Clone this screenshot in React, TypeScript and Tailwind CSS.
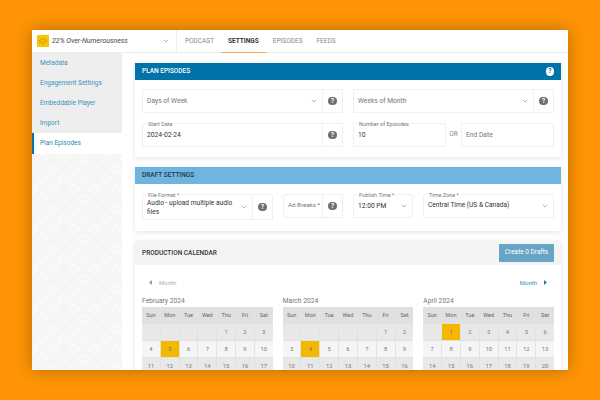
import { ChevronDown } from "lucide-react";

const tabs = ["PODCAST", "SETTINGS", "EPISODES", "FEEDS"];
const sideItems = ["Metadata", "Engagement Settings", "Embeddable Player", "Import"];
const dayNames = ["Sun", "Mon", "Tue", "Wed", "Thu", "Fri", "Sat"];

const months = [
  { title: "February 2024", blanks: 4, days: 17, hot: 5 },
  { title: "March 2024", blanks: 5, days: 16, hot: 4 },
  { title: "April 2024", blanks: 1, days: 20, hot: 1 },
];

function Help({ dark = true }: { dark?: boolean }) {
  return (
    <span
      className={`flex h-[8.5px] w-[8.5px] shrink-0 items-center justify-center rounded-full text-[6.5px] font-bold leading-none ${
        dark ? "bg-[#6f6f6f] text-white" : "bg-white text-[#0073a8]"
      }`}
    >
      ?
    </span>
  );
}

function Chevron() {
  return <ChevronDown className="h-[8px] w-[8px] shrink-0 text-[#666]" strokeWidth={1.5} />;
}

function Label({ text, required }: { text: string; required?: boolean }) {
  return (
    <span className="absolute -top-[3px] left-[4px] bg-white px-[1px] text-[5.5px] leading-[6px] text-[#777]">
      {text}
      {required && <span className="text-[#e0304a]"> *</span>}
    </span>
  );
}

function HelpCell() {
  return (
    <div className="flex w-[20px] shrink-0 items-center justify-center self-stretch border-l border-[#f0f0f0]">
      <Help />
    </div>
  );
}

function Month({ title, blanks, days, hot }: (typeof months)[number]) {
  const cells = [...Array(blanks).fill(0), ...Array.from({ length: days }, (_, i) => i + 1)];
  return (
    <div className="min-w-0">
      <div className="h-[14px] pt-[1px] text-[6.7px] leading-[14px] text-[#777]">{title}</div>
      <div className="grid grid-cols-7 gap-[1px] bg-[#e2e2e2]">
        {dayNames.map((d) => (
          <div key={d} className="flex h-[16px] items-center justify-center bg-[#e0e0e0] text-[5.5px] text-[#666]">
            {d}
          </div>
        ))}
        {cells.map((d, i) => {
          const lightRow = i >= 7 && i < 14;
          return (
            <div
              key={i}
              className={`flex h-[16px] items-center justify-center text-[5.8px] text-[#777] ${
                d === hot ? "bg-[#f5b800]" : lightRow ? "bg-[#f5f5f5]" : "bg-[#e8e8e8]"
              }`}
            >
              {d || ""}
            </div>
          );
        })}
      </div>
    </div>
  );
}

export default function App() {
  return (
    <div className="h-[400px] w-[600px] overflow-hidden bg-[#ff9505] pl-[32px] pt-[30px] font-['Roboto',sans-serif]">
      <div className="flex h-[340px] w-[536px] flex-col overflow-hidden bg-white shadow-[0_0_16px_rgba(80,40,0,0.4)]">
        {/* top bar */}
        <div className="flex h-[23px] shrink-0 border-b border-[#eee]">
          <div className="flex w-[145px] items-center border-r border-[#eee] pl-[5px] pr-[6px]">
            <svg viewBox="0 0 12 12" className="h-[12px] w-[12px] shrink-0">
              <rect width="12" height="12" fill="#f9c400" />
              <path d="M1.5 6 6 3l4.5 3L6 9z" fill="none" stroke="#c99a00" strokeWidth="0.7" />
              <path d="M3.5 6 6 4.4 8.500 6 6 7.600z" fill="none" stroke="#c99a00" strokeWidth="0.5" />
            </svg>
            <span className="ml-[3px] flex-1 truncate pt-[1px] text-[7px] italic text-[#444]">22% Over-Numerousness</span>
            <Chevron />
          </div>
          <div className="flex pl-[1px]">
            {tabs.map((t) => (
              <div
                key={t}
                className={`flex h-[23px] items-center px-[7px] pt-[1px] text-[6.5px] ${
                  t === "SETTINGS"
                    ? "border-b-[1.5px] border-[#f5a94a] font-bold text-[#333]"
                    : "text-[#888]"
                }`}
              >
                {t}
              </div>
            ))}
          </div>
        </div>

        <div className="flex min-h-0 flex-1">
          {/* sidebar */}
          <div className="flex w-[90px] shrink-0 flex-col">
            <div className="bg-[#eeeeee]">
              {sideItems.map((s) => (
                <div key={s} className="flex h-[20px] items-center pl-[8px] pt-[1px] text-[6.5px] text-[#3a93b8]">
                  {s}
                </div>
              ))}
            </div>
            <div className="flex h-[21px] items-center border-l-2 border-[#0073a8] pl-[6px] text-[6.5px] text-[#2a8bb2]">
              Plan Episodes
            </div>
            <svg className="w-full flex-1 bg-[#f6f6f6]">
              <defs>
                <pattern id="lattice" width="21" height="20" patternUnits="userSpaceOnUse">
                  <path d="M5 5 10.500 0 16 5 10.500 10z" fill="none" stroke="#ffffff" strokeWidth="0.9" />
                  <path d="M-5.500 15 0 10 5.500 15 0 20z" fill="none" stroke="#ffffff" strokeWidth="0.9" />
                  <path d="M15.500 15 21 10 26.500 15 21 20z" fill="none" stroke="#ffffff" strokeWidth="0.9" />
                </pattern>
              </defs>
              <rect width="100%" height="100%" fill="url(#lattice)" />
            </svg>
          </div>

          {/* content */}
          <div className="flex min-w-0 flex-1 flex-col gap-[10px] pl-[13px] pr-[7px] pt-[10px]">
            <section className="shrink-0 bg-white shadow-[0_1px_5px_rgba(0,0,0,0.12)]">
              <div className="flex h-[17px] items-center justify-between bg-[#0073a8] pl-[7px] pr-[7px] text-[6.5px] font-medium text-white">
                PLAN EPISODES
                <Help dark={false} />
              </div>
              <div className="flex flex-col gap-[10px] p-[7px] pb-[10px] pt-[9px]">
                <div className="grid grid-cols-2 gap-[10px]">
                  <div className="flex h-[24px] items-center rounded-[1px] border border-[#f0f0f0]">
                    <span className="flex-1 pl-[4px] text-[6.7px] text-[#777]">Days of Week</span>
                    <span className="pr-[4px]"><Chevron /></span>
                    <HelpCell />
                  </div>
                  <div className="flex h-[24px] items-center rounded-[1px] border border-[#f0f0f0]">
                    <span className="flex-1 pl-[4px] text-[6.7px] text-[#777]">Weeks of Month</span>
                    <span className="pr-[4px]"><Chevron /></span>
                    <HelpCell />
                  </div>
                </div>
                <div className="grid grid-cols-2 gap-[10px]">
                  <div className="relative flex h-[24px] items-center rounded-[1px] border border-[#f0f0f0]">
                    <Label text="Start Date" />
                    <span className="flex-1 pl-[4px] text-[6.7px] text-[#333]">2024-02-24</span>
                    <HelpCell />
                  </div>
                  <div className="flex items-center">
                    <div className="relative flex h-[24px] w-[93px] items-center rounded-[1px] border border-[#f0f0f0] pl-[4px] text-[6.7px] text-[#333]">
                      <Label text="Number of Episodes" />
                      10
                    </div>
                    <span className="w-[15px] text-center text-[6.5px] text-[#888]">OR</span>
                    <div className="flex h-[24px] flex-1 items-center rounded-[1px] border border-[#f0f0f0] pl-[4px] text-[6.7px] text-[#777]">
                      End Date
                    </div>
                  </div>
                </div>
              </div>
            </section>

            <section className="shrink-0 bg-white shadow-[0_1px_5px_rgba(0,0,0,0.12)]">
              <div className="flex h-[17px] items-center bg-[#70b5df] pl-[7px] text-[6.5px] font-medium text-[#1c3a4a]">
                DRAFT SETTINGS
              </div>
              <div className="flex items-start gap-[10px] p-[7px] pb-[11px] pt-[10px]">
                <div className="relative flex h-[26px] w-[131px] shrink-0 items-center rounded-[1px] border border-[#f0f0f0]">
                  <Label text="File Format" required />
                  <span className="flex-1 pl-[4px] pt-[1px] text-[6.6px] leading-[9px] text-[#333]">Audio - upload multiple audio files</span>
                  <span className="pr-[4px]"><Chevron /></span>
                  <HelpCell />
                </div>
                <div className="flex h-[24px] w-[60px] shrink-0 items-center rounded-[1px] border border-[#f0f0f0]">
                  <span className="flex-1 whitespace-nowrap pl-[4px] text-[6.2px] text-[#777]">
                    Ad Breaks <span className="text-[#e0304a]">*</span>
                  </span>
                  <HelpCell />
                </div>
                <div className="relative flex h-[24px] w-[60px] shrink-0 items-center rounded-[1px] border border-[#f0f0f0]">
                  <Label text="Publish Time" required />
                  <span className="flex-1 pl-[4px] text-[6.7px] text-[#333]">12:00 PM</span>
                  <span className="pr-[4px]"><Chevron /></span>
                </div>
                <div className="relative flex h-[24px] flex-1 items-center rounded-[1px] border border-[#f0f0f0]">
                  <Label text="Time Zone" required />
                  <span className="flex-1 pl-[4px] text-[6.6px] text-[#333]">Central Time (US &amp; Canada)</span>
                  <span className="pr-[4px]"><Chevron /></span>
                </div>
              </div>
            </section>

            <section className="flex-1 bg-white shadow-[0_1px_5px_rgba(0,0,0,0.12)]">
              <div className="flex h-[24px] items-center justify-between bg-[#f4f4f4] pl-[7px] pr-[7px] text-[6.5px] font-medium text-[#333]">
                <span className="pt-[1px]">PRODUCTION CALENDAR</span>
                <div className="flex h-[18px] w-[55px] items-center justify-center rounded-[1px] bg-[#66a6c4] text-[6.5px] font-normal text-white">
                  Create 0 Drafts
                </div>
              </div>
              <div className="flex h-[28px] items-center justify-between pl-[14px] pr-[7px] pt-[7px] text-[6px]">
                <span className="flex items-center gap-[7px] text-[#aaa]">
                  <svg viewBox="0 0 3 5" className="h-[5px] w-[3px]"><path d="M3 0v5L0 2.500z" fill="#999" /></svg>
                  Month
                </span>
                <span className="flex items-center gap-[7px] pr-[7px] text-[#2e8fb5]">
                  Month
                  <svg viewBox="0 0 3 5" className="h-[5px] w-[3px]"><path d="M0 0v5l3-2.500z" fill="#1f7fa8" /></svg>
                </span>
              </div>
              <div className="grid grid-cols-3 gap-[10px] px-[7px]">
                {months.map((m) => (
                  <Month key={m.title} {...m} />
                ))}
              </div>
            </section>
          </div>
        </div>
      </div>
    </div>
  );
}
